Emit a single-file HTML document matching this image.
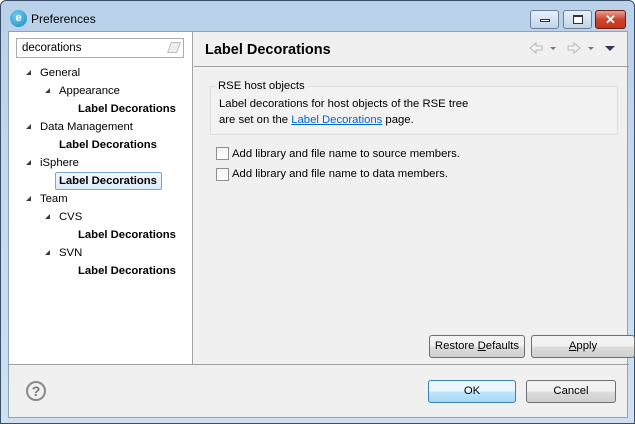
<!DOCTYPE html>
<html><head><style>
*{margin:0;padding:0;box-sizing:border-box}
body{width:635px;height:424px;overflow:hidden;font-family:"Liberation Sans",sans-serif;font-size:11.3px;color:#000;background:#fff}
.win{position:absolute;left:0;top:0;width:635px;height:424px;border:1px solid #3a4e66;border-radius:6px 6px 0 0;background:linear-gradient(#b9d1ea,#c4d8ee 40%,#cfe0f2)}
.title{position:absolute;left:30px;top:11px;font-size:12px;color:#000}
.logo{position:absolute;left:9px;top:9px;width:17px;height:17px;border-radius:50%;background:radial-gradient(circle at 40% 35%,#6fd0f0,#1a86c0);color:#fff;font-weight:bold;font-size:11px;text-align:center;line-height:17px}
.tb{position:absolute;top:9px;height:19px;border:1px solid #6d7f98;border-radius:3px;background:linear-gradient(#e7f0fa,#c3d4e8)}
.client{position:absolute;left:7px;top:30px;width:620px;height:387px;background:#f0f0f0;border:1px solid #8da2bb}
.left{position:absolute;left:0;top:0;width:184px;height:332px;background:#fff;border-right:1px solid #a0a0a0}
.search{position:absolute;left:7px;top:6px;width:168px;height:20px;border:1px solid #abadb3;background:#fff;padding:3px 5px;font-size:11.5px}
.t{position:absolute;font-size:11.3px;white-space:nowrap}
.b{font-weight:bold}
.tri{position:absolute;width:0;height:0;border-left:5px solid transparent;border-bottom:5px solid #3c3c3c}
.hdr{position:absolute;left:196px;top:10px;font-size:14.5px;font-weight:bold}
.hsep{position:absolute;left:185px;top:34px;width:435px;height:1px;background:#a0a0a0}
.grp{position:absolute;left:201px;top:54px;width:408px;height:49px;border:1px solid #dcdcdc;border-radius:2px;background:#f2f2f2}
.chk{position:absolute;width:13px;height:13px;border:1px solid #8e8f8f;background:linear-gradient(#f2f2f2,#fff)}
.btn{position:absolute;height:23px;border:1px solid #707070;border-radius:3px;background:linear-gradient(#f2f2f2 50%,#dddddd 50%,#cfcfcf);text-align:center;line-height:21px;font-size:11.3px}
.bsep{position:absolute;left:0;top:332px;width:620px;height:1px;background:#a0a0a0}
</style></head><body>
<div class="win">
<div class="logo">e</div>
<div class="title">Preferences</div>
<div class="tb" style="left:529px;width:29px"><div style="position:absolute;left:9px;top:8px;width:10px;height:3px;border:1px solid #333;background:#fff"></div></div>
<div class="tb" style="left:562px;width:29px"><div style="position:absolute;left:9px;top:4px;width:10px;height:9px;border:1px solid #333;border-top-width:2px;background:#fff"></div></div>
<div class="tb" style="left:594px;width:31px;border-color:#6b1d12;background:linear-gradient(#e8a193,#c8452e 50%,#c7341b)"><div style="position:absolute;left:0;width:100%;top:0;color:#fff;font-weight:bold;font-size:13px;text-align:center;line-height:17px">✕</div></div>
<div class="client">
<div class="left">
<div class="search">decorations<span style="position:absolute;right:4px;top:3px;width:10px;height:11px;border:1px solid #bbb;transform:skewX(-20deg);background:#eee"></span></div>
<div class="tri" style="left:17px;top:38px"></div><div class="t" style="left:31px;top:35px">General</div>
<div class="tri" style="left:36px;top:56px"></div><div class="t" style="left:50px;top:53px">Appearance</div>
<div class="t b" style="left:69px;top:71px">Label Decorations</div>
<div class="tri" style="left:17px;top:92px"></div><div class="t" style="left:31px;top:89px">Data Management</div>
<div class="t b" style="left:50px;top:107px">Label Decorations</div>
<div class="tri" style="left:17px;top:128px"></div><div class="t" style="left:31px;top:125px">iSphere</div>
<div style="position:absolute;left:46px;top:140px;width:107px;height:18px;border:1px solid #7da2ce;border-radius:2px;background:linear-gradient(#f2f7fd,#dcebfc)"></div>
<div class="t b" style="left:50px;top:143px">Label Decorations</div>
<div class="tri" style="left:17px;top:164px"></div><div class="t" style="left:31px;top:161px">Team</div>
<div class="tri" style="left:36px;top:182px"></div><div class="t" style="left:50px;top:179px">CVS</div>
<div class="t b" style="left:69px;top:197px">Label Decorations</div>
<div class="tri" style="left:36px;top:218px"></div><div class="t" style="left:50px;top:215px">SVN</div>
<div class="t b" style="left:69px;top:233px">Label Decorations</div>
</div>
<div class="hdr">Label Decorations</div>
<svg style="position:absolute;left:519px;top:9px" width="90" height="14">
<path d="M2 7 L8 2 V5 H14 V9 H8 V12 Z" fill="#f4f4f4" stroke="#b8b8b8"/>
<path d="M22 6 h6 l-3 3z" fill="#777"/>
<path d="M52 7 L46 2 V5 H40 V9 H46 V12 Z" fill="#f4f4f4" stroke="#b8b8b8"/>
<path d="M60 6 h6 l-3 3z" fill="#777"/>
<path d="M77 5 h10 l-5 5z" fill="#3a3550"/>
</svg>
<div class="hsep"></div>
<div class="grp"></div>
<div class="t" style="left:206px;top:48px;background:#f0f0f0;padding:0 3px">RSE host objects</div>
<div class="t" style="left:210px;top:66px">Label decorations for host objects of the RSE tree</div>
<div class="t" style="left:210px;top:82px">are set on the <span style="color:#0066cc;text-decoration:underline">Label Decorations</span> page.</div>
<div class="chk" style="left:207px;top:115px"></div><div class="t" style="left:223px;top:116px">Add library and file name to source members.</div>
<div class="chk" style="left:207px;top:136px"></div><div class="t" style="left:223px;top:136px">Add library and file name to data members.</div>
<div class="btn" style="left:420px;top:303px;width:96px">Restore <u>D</u>efaults</div>
<div class="btn" style="left:522px;top:303px;width:104px"><u>A</u>pply</div>
<div class="bsep"></div>
<div style="position:absolute;left:17px;top:349px;width:20px;height:20px;border:2px solid #8a8a8a;border-radius:50%;text-align:center;font-weight:bold;color:#777;font-size:14px;line-height:16px">?</div>
<div class="btn" style="left:419px;top:348px;width:88px;border-color:#3c7fb1;background:linear-gradient(#eaf6fd 50%,#bee6fd 50%,#a7d9f5)">OK</div>
<div class="btn" style="left:517px;top:348px;width:90px">Cancel</div>
</div>
</div>
</body></html>
